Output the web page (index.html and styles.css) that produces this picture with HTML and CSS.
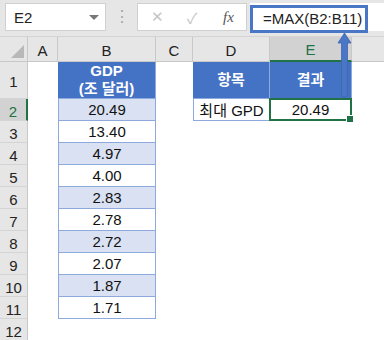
FILE: index.html
```html
<!DOCTYPE html>
<html lang="ko">
<head>
    <meta charset="UTF-8">
    <link rel="stylesheet" href="styles.css">
    <title>MAX</title>
</head>
<body>

<div class="formula-bar">
    <div class="name-box">
        <span>E2</span>
        <span class="caret"></span>
    </div>
    <div class="grip">⋮</div>
    <div class="fx-box">
        <span class="btn">✕</span>
        <span class="btn">✓</span>
        <span class="fx">fx</span>
    </div>
    <div class="formula-field">
        <div class="formula-text">=MAX(B2:B11)</div>
    </div>
</div>

<div class="sheet">
    <div class="corner"><span class="tri"></span></div>
    <div class="col-head">A</div>
    <div class="col-head">B</div>
    <div class="col-head">C</div>
    <div class="col-head">D</div>
    <div class="col-head active">E</div>
    <div class="col-head last"></div>

    <div class="row-head">1</div>
    <div class="cell"></div>
    <div class="cell head">GDP<br>(조 달러)</div>
    <div class="cell"></div>
    <div class="cell head">항목</div>
    <div class="cell head">결과</div>
    <div class="cell"></div>

    <div class="row-head active">2</div>
    <div class="cell"></div>
    <div class="cell data band">20.49</div>
    <div class="cell"></div>
    <div class="cell data">최대 GPD</div>
    <div class="cell data selected">20.49<span class="handle"></span></div>
    <div class="cell"></div>

    <div class="row-head">3</div>
    <div class="cell"></div>
    <div class="cell data">13.40</div>
    <div class="cell"></div><div class="cell"></div><div class="cell"></div><div class="cell"></div>

    <div class="row-head">4</div>
    <div class="cell"></div>
    <div class="cell data band">4.97</div>
    <div class="cell"></div><div class="cell"></div><div class="cell"></div><div class="cell"></div>

    <div class="row-head">5</div>
    <div class="cell"></div>
    <div class="cell data">4.00</div>
    <div class="cell"></div><div class="cell"></div><div class="cell"></div><div class="cell"></div>

    <div class="row-head">6</div>
    <div class="cell"></div>
    <div class="cell data band">2.83</div>
    <div class="cell"></div><div class="cell"></div><div class="cell"></div><div class="cell"></div>

    <div class="row-head">7</div>
    <div class="cell"></div>
    <div class="cell data">2.78</div>
    <div class="cell"></div><div class="cell"></div><div class="cell"></div><div class="cell"></div>

    <div class="row-head">8</div>
    <div class="cell"></div>
    <div class="cell data band">2.72</div>
    <div class="cell"></div><div class="cell"></div><div class="cell"></div><div class="cell"></div>

    <div class="row-head">9</div>
    <div class="cell"></div>
    <div class="cell data">2.07</div>
    <div class="cell"></div><div class="cell"></div><div class="cell"></div><div class="cell"></div>

    <div class="row-head">10</div>
    <div class="cell"></div>
    <div class="cell data band">1.87</div>
    <div class="cell"></div><div class="cell"></div><div class="cell"></div><div class="cell"></div>

    <div class="row-head">11</div>
    <div class="cell"></div>
    <div class="cell data">1.71</div>
    <div class="cell"></div><div class="cell"></div><div class="cell"></div><div class="cell"></div>

    <div class="row-head">12</div>
    <div class="cell"></div><div class="cell"></div><div class="cell"></div>
    <div class="cell"></div><div class="cell"></div><div class="cell"></div>
</div>

<!-- arrow from result cell up to the formula -->
<svg class="arrow" width="20" height="70" viewBox="0 0 20 70">
    <path d="M7.5 13 L7.5 64 Q7.5 67 10.5 67 Q13.5 67 13.5 64 L13.5 13 L17 13 L10.5 3 L4 13 Z" fill="#4a76c6" stroke="#3d66b0" stroke-width="0.8"/>
</svg>

</body>
</html>
```

FILE: styles.css
```css
body {
    margin: 0;
    width: 384px;
    height: 340px;
    overflow: hidden;
    background-color: #fff;
    font-family: "Liberation Sans", "Noto Sans CJK KR", sans-serif;
    position: relative;
}

.formula-bar {
    display: flex;
    align-items: flex-start;
    height: 37px;
    background-color: #e6e6e6;
    box-sizing: border-box;
    padding-top: 3px;
    border-bottom: 1px solid #d4d4d4;
}

.name-box {
    display: flex;
    align-items: center;
    justify-content: space-between;
    box-sizing: border-box;
    width: 101px;
    height: 28px;
    margin-left: 5px;
    padding: 0 6px 0 8px;
    background-color: #fff;
    border: 1px solid #d0d0d0;
    font-size: 15px;
    color: #222;
}

.caret {
    width: 0;
    height: 0;
    border-left: 5px solid transparent;
    border-right: 5px solid transparent;
    border-top: 5px solid #777;
}

.grip {
    width: 31px;
    text-align: center;
    color: #a8a8a8;
    font-size: 16px;
    line-height: 28px;
}

.fx-box {
    display: flex;
    align-items: center;
    box-sizing: border-box;
    width: 110px;
    height: 28px;
    background-color: #fff;
    border: 1px solid #d0d0d0;
    padding-left: 13px;
}

.fx-box .btn {
    width: 36px;
    color: #c4c4c4;
    font-size: 15px;
}

.fx-box .fx {
    font-family: "Liberation Serif", serif;
    font-style: italic;
    font-size: 15px;
    color: #555;
}

.formula-field {
    flex: 1;
    height: 28px;
    margin-left: 3px;
    background-color: #fff;
}

.formula-text {
    box-sizing: border-box;
    width: 118px;
    height: 28px;
    margin-top: 2px;
    border: 3px solid #4a76c6;
    padding-left: 10px;
    font-size: 15px;
    line-height: 22px;
    color: #222;
    background-color: #fff;
}

.sheet {
    display: grid;
    grid-template-columns: 28px 30px 98px 37px 77px 82px 32px;
    grid-template-rows: 25px 37px repeat(11, 22px);
    font-size: 15px;
}

.corner {
    background-color: #e6e6e6;
    border-right: 1px solid #c8c8c8;
    border-bottom: 1px solid #c8c8c8;
    position: relative;
}

.tri {
    position: absolute;
    right: 3px;
    bottom: 3px;
    width: 0;
    height: 0;
    border-left: 13px solid transparent;
    border-bottom: 13px solid #b8b8b8;
}

.col-head {
    background-color: #e6e6e6;
    border-right: 1px solid #c8c8c8;
    border-bottom: 1px solid #c8c8c8;
    display: flex;
    align-items: center;
    justify-content: center;
    padding-top: 2px;
    color: #222;
}

.col-head.active {
    background-color: #d2d2d2;
    color: #217346;
    border-bottom: 2px solid #217346;
}

.col-head.last {
    border-right: none;
}

.row-head {
    background-color: #e6e6e6;
    border-right: 1px solid #c8c8c8;
    border-bottom: 1px solid #d4d4d4;
    display: flex;
    align-items: center;
    justify-content: center;
    color: #222;
    padding-top: 3px;
    box-sizing: border-box;
}

.row-head.active {
    background-color: #d2d2d2;
    color: #217346;
    border-right: 2px solid #217346;
}

.cell {
    background-color: #fff;
}

.cell.head {
    background-color: #4472c4;
    color: #fff;
    font-weight: bold;
    text-align: center;
    display: flex;
    align-items: center;
    justify-content: center;
    line-height: 18px;
    border-right: 1px solid #8ea9db;
    border-bottom: 1px solid #8ea9db;
}

.cell.data {
    display: flex;
    align-items: center;
    justify-content: center;
    border: 1px solid #8ea9db;
    border-top: none;
    color: #111;
}

.cell.band {
    background-color: #d9e1f2;
}

.cell.selected {
    position: relative;
    border: 2px solid #217346;
    margin: -1px 0 0 -1px;
}

.handle {
    position: absolute;
    right: -4px;
    bottom: -4px;
    width: 6px;
    height: 6px;
    background-color: #217346;
    border: 1px solid #fff;
}

.arrow {
    position: absolute;
    left: 334px;
    top: 30px;
}
```
